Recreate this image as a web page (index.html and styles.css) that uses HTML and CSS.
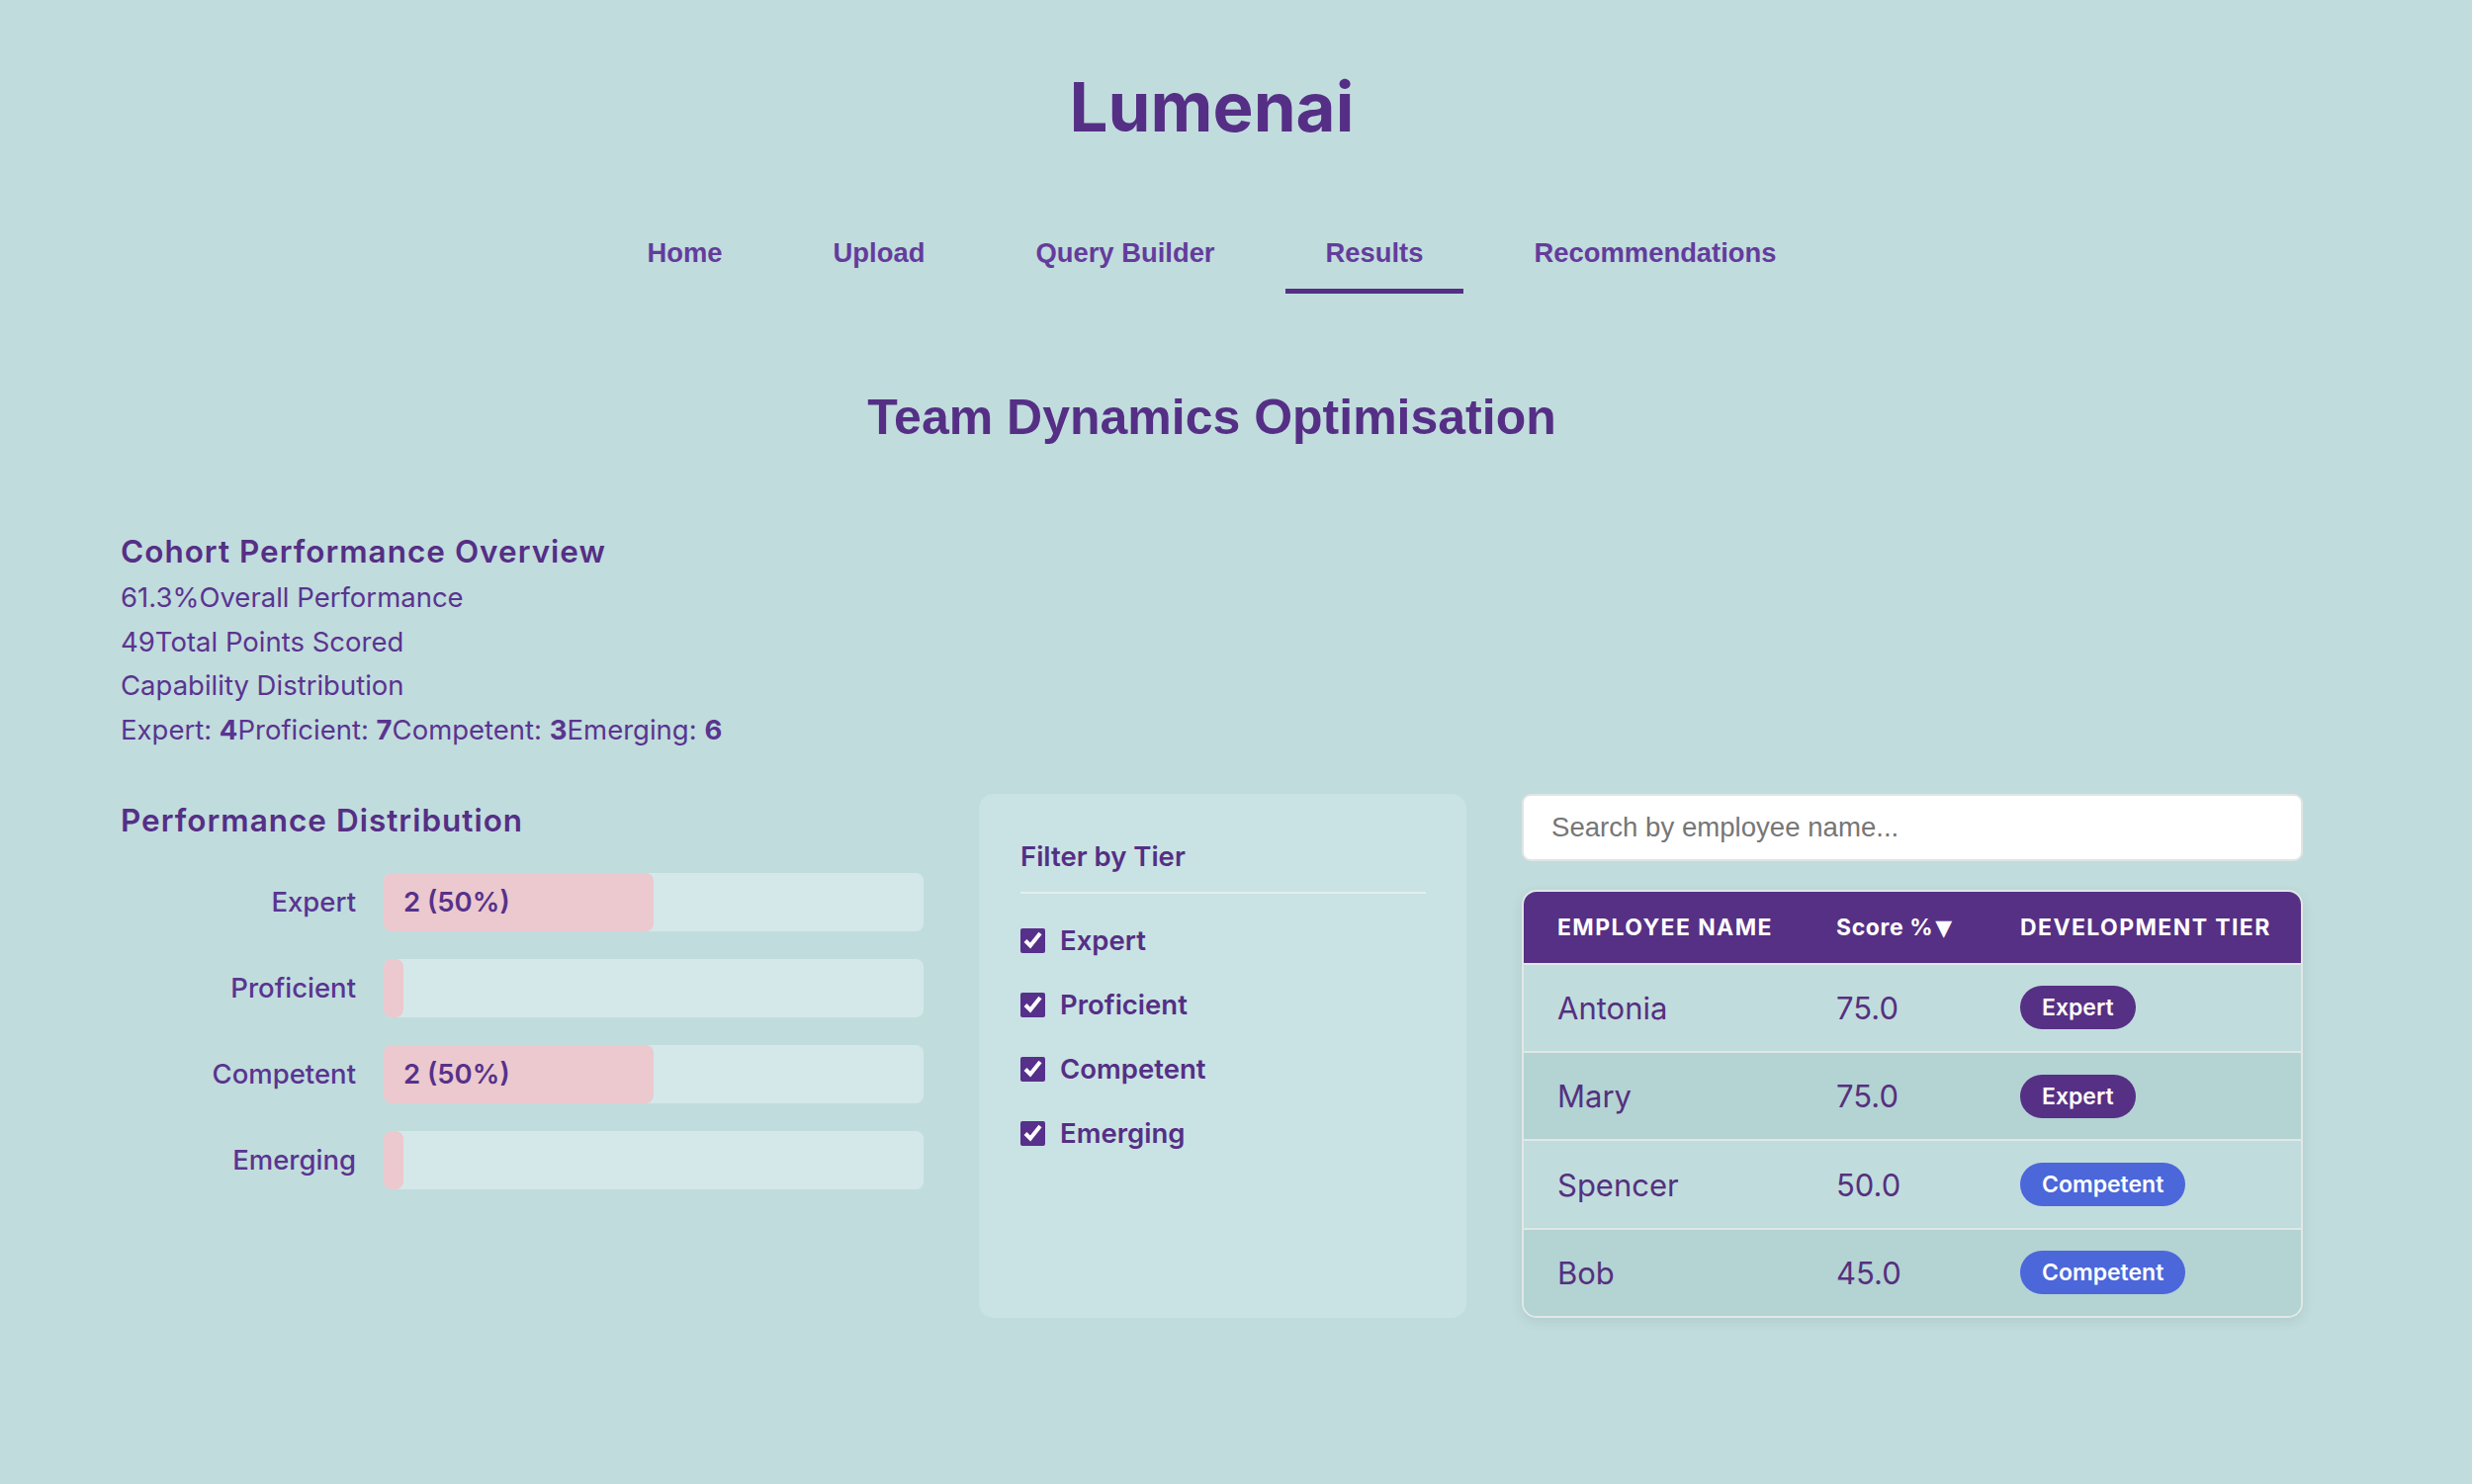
FILE: index.html
```html
<!DOCTYPE html>
<html lang="en">
<head>
<meta charset="utf-8">
<title>Lumenai – Results</title>
<link rel="stylesheet" href="styles.css">
</head>
<body>
<div class="page">
  <header class="site-header">
    <h1 class="brand">Lumenai</h1>
    <nav class="nav">
      <a class="nav-link" href="#">Home</a>
      <a class="nav-link" href="#">Upload</a>
      <a class="nav-link" href="#">Query Builder</a>
      <a class="nav-link active" href="#">Results</a>
      <a class="nav-link" href="#">Recommendations</a>
    </nav>
  </header>

  <main>
    <h2 class="page-title">Team Dynamics Optimisation</h2>

    <section class="overview">
      <h3 class="section-title">Cohort Performance Overview</h3>
      <div class="stat-lines">
        <div class="stat-line"><span>61.3%</span><span>Overall Performance</span></div>
        <div class="stat-line"><span>49</span><span>Total Points Scored</span></div>
        <div class="stat-line">Capability Distribution</div>
        <div class="stat-line">
          <span>Expert: <b>4</b></span><span>Proficient: <b>7</b></span><span>Competent: <b>3</b></span><span>Emerging: <b>6</b></span>
        </div>
      </div>
    </section>

    <div class="results-grid">
      <section class="distribution">
        <h3 class="section-title dist-title">Performance Distribution</h3>
        <div class="bars">
          <div class="bar-row">
            <span class="bar-label">Expert</span>
            <div class="bar-track"><div class="bar-fill" style="width:50%">2 (50%)</div></div>
          </div>
          <div class="bar-row">
            <span class="bar-label">Proficient</span>
            <div class="bar-track"><div class="bar-fill" style="width:0%"></div></div>
          </div>
          <div class="bar-row">
            <span class="bar-label">Competent</span>
            <div class="bar-track"><div class="bar-fill" style="width:50%">2 (50%)</div></div>
          </div>
          <div class="bar-row">
            <span class="bar-label">Emerging</span>
            <div class="bar-track"><div class="bar-fill" style="width:0%"></div></div>
          </div>
        </div>
      </section>

      <aside class="filter-panel">
        <h4 class="filter-title">Filter by Tier</h4>
        <div class="filter-list">
          <label class="filter-item"><input type="checkbox" checked><span>Expert</span></label>
          <label class="filter-item"><input type="checkbox" checked><span>Proficient</span></label>
          <label class="filter-item"><input type="checkbox" checked><span>Competent</span></label>
          <label class="filter-item"><input type="checkbox" checked><span>Emerging</span></label>
        </div>
      </aside>

      <section class="employees">
        <input class="search" type="text" placeholder="Search by employee name...">
        <div class="table" role="table">
          <div class="table-head" role="row">
            <div class="th" role="columnheader">Employee Name</div>
            <div class="th th-score" role="columnheader">Score %<span class="sort">▼</span></div>
            <div class="th" role="columnheader">Development Tier</div>
          </div>
          <div class="table-row" role="row">
            <div class="td" role="cell">Antonia</div>
            <div class="td" role="cell">75.0</div>
            <div class="td" role="cell"><span class="badge badge-expert">Expert</span></div>
          </div>
          <div class="table-row alt" role="row">
            <div class="td" role="cell">Mary</div>
            <div class="td" role="cell">75.0</div>
            <div class="td" role="cell"><span class="badge badge-expert">Expert</span></div>
          </div>
          <div class="table-row" role="row">
            <div class="td" role="cell">Spencer</div>
            <div class="td" role="cell">50.0</div>
            <div class="td" role="cell"><span class="badge badge-competent">Competent</span></div>
          </div>
          <div class="table-row alt" role="row">
            <div class="td" role="cell">Bob</div>
            <div class="td" role="cell">45.0</div>
            <div class="td" role="cell"><span class="badge badge-competent">Competent</span></div>
          </div>
        </div>
      </section>
    </div>
  </main>
</div>
</body>
</html>
```

FILE: styles.css
```css
* { box-sizing: border-box; }

html, body {
  margin: 0;
  padding: 0;
}

body {
  background: #c1dcdd;
  font-family: Inter, "Noto Sans", sans-serif;
  color: #57318a;
  min-height: 1501px;
}

.page {
  width: 2207px;
  margin-left: 122px;
}

/* Header */
.site-header {
  padding-top: 66px;
  text-align: center;
}

.brand {
  margin: 0;
  font-family: Inter, sans-serif;
  font-weight: 700;
  font-size: 69px;
  line-height: 84px;
  color: #552f85;
}

.nav {
  margin-top: 67px;
  display: flex;
  justify-content: center;
  gap: 30px;
}

.nav-link {
  font-family: "Liberation Sans", Arial, sans-serif;
  font-weight: 700;
  font-size: 27.4px;
  line-height: 30px;
  color: #643c9c;
  text-decoration: none;
  padding: 24px 41px 21px;
  border-bottom: 5px solid transparent;
}

.nav-link.active {
  border-bottom-color: #552f85;
}

/* Page title */
.page-title {
  margin: 95px 0 0;
  text-align: center;
  font-family: "Liberation Sans", Arial, sans-serif;
  font-weight: 700;
  font-size: 50px;
  line-height: 60px;
  color: #552f85;
}

/* Overview */
.overview {
  margin-top: 88px;
}

.section-title {
  margin: 0;
  font-weight: 600;
  font-size: 31.5px;
  line-height: 36px;
  letter-spacing: 1px;
  color: #552f85;
}

.stat-lines {
  margin-top: 6px;
}

.stat-line {
  font-size: 27.5px;
  line-height: 44.7px;
  color: #5a3490;
}

.stat-line b {
  font-weight: 700;
}

/* Grid */
.results-grid {
  margin-top: 42px;
  display: grid;
  grid-template-columns: 812px 493px 1fr;
  column-gap: 56px;
  align-items: stretch;
}

/* Distribution */
.distribution {
  align-self: start;
}

.dist-title {
  margin-top: 9px;
}

.bars {
  margin-top: 35px;
  display: flex;
  flex-direction: column;
  gap: 28px;
}

.bar-row {
  display: grid;
  grid-template-columns: 238px 1fr;
  column-gap: 28px;
  align-items: center;
  height: 59px;
}

.bar-label {
  text-align: right;
  font-weight: 500;
  font-size: 27.5px;
  color: #5a3490;
}

.bar-track {
  height: 59px;
  background: #d4e8ea;
  border-radius: 8px;
}

.bar-fill {
  height: 100%;
  background: #ebc9ce;
  border-radius: 8px;
  padding-left: 20px;
  display: flex;
  align-items: center;
  font-weight: 600;
  font-size: 27.5px;
  color: #57318a;
  white-space: nowrap;
}

/* Filter panel */
.filter-panel {
  background: #c9e3e4;
  border-radius: 15px;
  padding: 47px 41px 0 42px;
}

.filter-title {
  margin: 0;
  font-weight: 600;
  font-size: 27.5px;
  line-height: 33px;
  padding-bottom: 19px;
  border-bottom: 2px solid #e3eeee;
  color: #552f85;
}

.filter-list {
  margin-top: 31px;
  display: flex;
  flex-direction: column;
  gap: 32px;
}

.filter-item {
  display: flex;
  align-items: center;
  gap: 15px;
  height: 33px;
  font-weight: 600;
  font-size: 27.5px;
  color: #552f85;
}

.filter-item input {
  margin: 0;
  width: 25px;
  height: 25px;
  accent-color: #56308a;
}

/* Employees */
.employees {
  align-self: start;
}

.search {
  display: block;
  width: 100%;
  height: 68px;
  margin: 0;
  padding: 0 28px;
  background: #ffffff;
  border: 2px solid #e2e4e4;
  border-radius: 9px;
  font-family: "Liberation Sans", Arial, sans-serif;
  font-size: 27.6px;
  color: #333;
  outline: none;
}

.search::placeholder {
  color: #767676;
}

.table {
  margin-top: 29px;
  border: 2px solid #e1e7e7;
  border-radius: 15px;
  overflow: hidden;
  box-shadow: 0 4px 12px rgba(40, 70, 70, 0.10);
}

.table-head,
.table-row {
  display: grid;
  grid-template-columns: 282px 186px 1fr;
  align-items: center;
}

.table-head {
  height: 72px;
  background: #563084;
}

.th {
  padding-left: 34px;
  font-weight: 700;
  font-size: 23px;
  letter-spacing: 1.4px;
  text-transform: uppercase;
  color: #ffffff;
  white-space: nowrap;
}

.th-score {
  text-transform: none;
  letter-spacing: 0.6px;
}

.sort {
  font-family: "DejaVu Sans", sans-serif;
  font-size: 22px;
  letter-spacing: 0;
  margin-left: 2px;
}

.table-row {
  height: 89.3px;
  border-top: 2px solid #e0e7e7;
  background: #c1dcdd;
}

.table-row.alt {
  background: #b4d3d3;
}

.td {
  padding-left: 34px;
  font-size: 31px;
  font-weight: 400;
  color: #55307f;
}

.badge {
  display: inline-block;
  height: 44px;
  line-height: 44px;
  padding: 0 22px;
  border-radius: 22px;
  font-size: 23px;
  font-weight: 600;
  color: #ffffff;
}

.badge-expert {
  background: #563084;
}

.badge-competent {
  background: #4b67da;
}
```
